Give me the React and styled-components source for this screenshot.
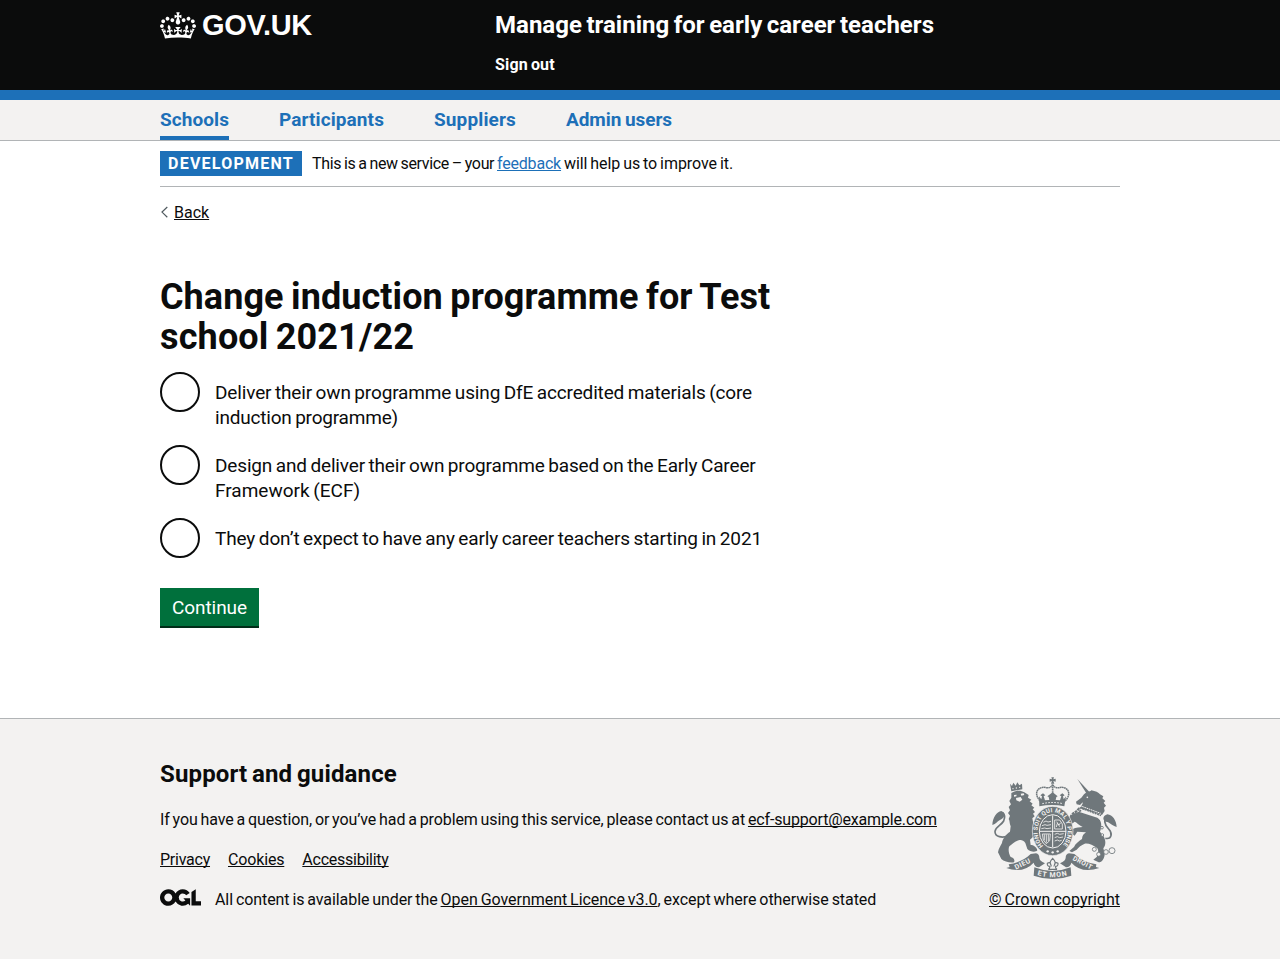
import React from "react";
import styled, { createGlobalStyle } from "styled-components";

const ink = "#0b0c0c";
const blue = "#1d70b8";
const grey = "#f3f2f1";
const line = "#b1b4b6";
const stone = "#6f777b";

const GlobalStyle = createGlobalStyle`
  html {
    background: ${grey};
  }
  body {
    margin: 0;
    color: ${ink};
    background: #fff;
    font-family: Roboto, "Liberation Sans", sans-serif;
    font-size: 16px;
    line-height: 20px;
  }
`;

const Container = styled.div`
  width: 960px;
  margin: 0 auto;
`;

/* Letter and word spacing for one run of text */
const Run = styled.span`
  letter-spacing: ${(p) => p.$track || 0}px;
  word-spacing: ${(p) => p.$word ?? -1}px;
  white-space: ${(p) => (p.$pre ? "pre" : "nowrap")};
`;

const Link = styled.a`
  color: ${(p) => (p.$blue ? blue : ink)};
  letter-spacing: ${(p) => p.$track || 0}px;
  word-spacing: -1px;
  text-decoration: underline;
  text-decoration-thickness: 1px;
  text-decoration-skip-ink: none;
  text-underline-offset: 1px;
  white-space: nowrap;
`;

const Header = styled.header`
  background: ${ink};
  color: #fff;
  border-bottom: 10px solid ${blue};
`;

const HeaderRow = styled(Container)`
  display: grid;
  grid-template-columns: 335px 1fr;
  height: 90px;
  box-sizing: border-box;
  padding-top: 10px;
`;

const Logo = styled.a`
  display: flex;
  align-items: flex-start;
  gap: 6px;
  color: #fff;
  svg {
    margin-top: 2px;
  }
`;

const Wordmark = styled.span`
  font-family: "Liberation Sans", Arial, sans-serif;
  font-size: 29px;
  line-height: 30px;
  font-weight: 700;
  letter-spacing: -0.3px;
`;

const ServiceName = styled.div`
  font-size: 24px;
  line-height: 30px;
  font-weight: 700;
  margin-bottom: 15px;
`;

const SignOut = styled.a`
  display: block;
  font-weight: 700;
`;

const Nav = styled.nav`
  background: ${grey};
  border-bottom: 1px solid ${line};
`;

const NavList = styled(Container)`
  display: flex;
  gap: 50px;
  height: 40px;
`;

const NavItem = styled.a`
  box-sizing: border-box;
  width: ${(p) => p.$width}px;
  padding-top: 7px;
  color: ${blue};
  font-size: 19px;
  line-height: 25px;
  font-weight: 700;
  border-bottom: 4px solid ${(p) => (p.$current ? blue : "transparent")};
`;

const PhaseBanner = styled.div`
  display: flex;
  align-items: flex-start;
  gap: 10px;
  padding: 10px 0;
  border-bottom: 1px solid ${line};
`;

const Tag = styled.strong`
  box-sizing: border-box;
  width: 142px;
  padding-left: 8px;
  background: ${blue};
  color: #fff;
  line-height: 25px;
  letter-spacing: 1.24px;
`;

const PhaseText = styled.span`
  padding-top: 1px;
  line-height: 23px;
`;

const BackLink = styled.div`
  display: flex;
  align-items: center;
  gap: 5px;
  height: 20px;
  margin-top: 16px;
  svg {
    margin-bottom: 2px;
  }
`;

const Main = styled.main`
  width: 630px;
  padding-top: 54px;
  height: 495px;
  box-sizing: border-box;
`;

const Title = styled.h1`
  margin: 0 0 15px;
  font-size: 36px;
  line-height: 40px;
  font-weight: 700;
`;

const RadioGroup = styled.div`
  display: flex;
  flex-direction: column;
  gap: 10px;
  margin-bottom: 30px;
`;

const RadioItem = styled.label`
  display: flex;
  gap: 15px;
  padding-bottom: ${(p) => (p.$last ? 0 : 5)}px;
`;

const Radio = styled.input`
  appearance: none;
  flex: none;
  box-sizing: border-box;
  width: 40px;
  height: 40px;
  margin: 0;
  border: 2px solid ${ink};
  border-radius: 50%;
  background: #fff;
`;

const RadioText = styled.span`
  padding-top: 8px;
  font-size: 19px;
  line-height: 25px;
`;

const Button = styled.button`
  display: block;
  width: 99px;
  height: 38px;
  padding: 1px 0 0;
  border: 0;
  background: #00703c;
  box-shadow: 0 2px 0 #002d18;
  color: #fff;
  font-family: inherit;
  font-size: 19px;
  line-height: 23px;
`;

const Footer = styled.footer`
  box-sizing: border-box;
  height: 241px;
  padding-top: 40px;
  border-top: 1px solid ${line};
  background: ${grey};
`;

const FooterRow = styled(Container)`
  display: flex;
  justify-content: space-between;
`;

const FooterTitle = styled.h2`
  margin: 0 0 21px;
  font-size: 24px;
  line-height: 30px;
  font-weight: 700;
`;

const FooterText = styled.p`
  margin: 0 0 20px;
`;

const FooterLinks = styled.div`
  display: flex;
  gap: 18px;
  margin-bottom: 20px;
`;

const Licence = styled.div`
  display: flex;
  align-items: flex-start;
  gap: 14px;
  svg {
    margin-top: -1px;
  }
`;

const Copyright = styled.div`
  display: flex;
  flex-direction: column;
  align-items: flex-end;
  padding-top: 18px;
  svg {
    margin: 0 3px 11px 0;
  }
`;

const Crown = () => (
  <svg width="36" height="27" viewBox="0 0 132 97" fill="#fff">
    <path
      fillRule="evenodd"
      d="M25 30.2c3.5 1.5 7.7-.2 9.1-3.7 1.5-3.6-.2-7.8-3.9-9.2-3.6-1.4-7.6.3-9.1 3.9-1.4 3.5.3 7.5 3.9 9zM9 39.5c3.6 1.5 7.8-.2 9.2-3.7 1.5-3.6-.2-7.8-3.9-9.1-3.6-1.5-7.6.2-9.1 3.8-1.4 3.5.3 7.5 3.8 9zM4.4 57.2c3.5 1.5 7.7-.2 9.1-3.8 1.5-3.6-.2-7.7-3.9-9.1-3.5-1.5-7.6.3-9.1 3.8-1.4 3.5.3 7.6 3.9 9.1zm38.3-21.4c3.5 1.5 7.7-.2 9.1-3.8 1.5-3.6-.2-7.7-3.9-9.1-3.6-1.5-7.6.3-9.1 3.8-1.3 3.6.4 7.7 3.9 9.1zm64.4-5.6c-3.6 1.5-7.8-.2-9.1-3.7-1.5-3.6.2-7.8 3.8-9.2 3.6-1.4 7.7.3 9.2 3.9 1.3 3.5-.4 7.5-3.9 9zm15.9 9.3c-3.6 1.5-7.7-.2-9.1-3.7-1.5-3.6.2-7.8 3.7-9.1 3.6-1.5 7.7.2 9.2 3.8 1.5 3.5-.3 7.5-3.8 9zm4.7 17.7c-3.6 1.5-7.8-.2-9.2-3.8-1.5-3.6.2-7.7 3.9-9.1 3.6-1.5 7.7.3 9.2 3.8 1.3 3.5-.4 7.6-3.9 9.1zM89.3 35.8c-3.6 1.5-7.8-.2-9.2-3.8-1.4-3.6.2-7.7 3.9-9.1 3.6-1.5 7.7.3 9.2 3.8 1.4 3.6-.3 7.7-3.9 9.1zM69.7 17.7l8.9 4.7V9.3l-8.9 2.8c-.2-.3-.5-.6-.9-.9L72.4 0H59.6l3.5 11.2c-.3.3-.6.5-.9.9l-8.8-2.8v13.1l8.8-4.7c.3.3.6.7.9.9l-5 15.4v.1c-.2.8-.4 1.6-.4 2.4 0 4.1 3.1 7.5 7 8.1h.2c.3 0 .7.1 1 .1.4 0 .7 0 1-.1h.2c4-.6 7.1-4.1 7.1-8.1 0-.8-.1-1.7-.4-2.4V34l-5.1-15.4c.4-.2.7-.6 1-.9zM66 92.8c16.9 0 32.8 1.1 47.1 3.2 4-16.9 8.9-26.7 14-33.5l-9.6-3.4c1 4.9 1.1 7.2 0 10.2-1.5-1.4-3-4.3-4.2-8.7L108.6 76c2.8-2 5-3.2 7.5-3.3-4.4 9.4-10 11.9-13.6 11.2-4.3-.8-6.3-4.6-5.6-7.9 1-4.7 5.7-5.9 8-.5 4.3-8.7-3-11.4-7.6-8.8 7.1-7.2 7.9-13.5 2.1-21.1-8 6.1-8.1 12.3-4.5 20.8-4.7-5.4-12.1-2.5-9.5 6.2 3.4-5.2 7.9-2 7.2 3.1-.6 4.3-6.4 7.8-13.5 7.2-10.3-.9-10.9-8-11.2-13.8 2.5-.5 7.1 1.8 11 7.3L80.2 60c-4.1 4.4-8 5.3-12.3 5.4 1.4-4.4 8-11.6 8-11.6H55.5s6.4 7.2 7.9 11.6c-4.2-.1-8-1-12.3-5.4l1.4 16.4c3.9-5.5 8.5-7.7 10.9-7.3-.3 5.8-.9 12.8-11.1 13.8-7.2.6-12.9-2.9-13.5-7.2-.7-5 3.8-8.3 7.1-3.1 2.7-8.7-4.6-11.6-9.4-6.2 3.7-8.5 3.6-14.7-4.6-20.8-5.8 7.6-5 13.9 2.2 21.1-4.7-2.6-11.9.1-7.7 8.8 2.3-5.5 7.1-4.2 8.1.5.7 3.3-1.3 7.1-5.7 7.9-3.5.7-9-1.8-13.5-11.2 2.5.1 4.7 1.3 7.5 3.3l-4.7-15.4c-1.2 4.4-2.7 7.2-4.3 8.7-1.1-3-.9-5.3 0-10.2l-9.5 3.4c5 6.9 9.9 16.7 14 33.5 14.8-2.1 30.8-3.2 47.7-3.2z"
    />
  </svg>
);

const OglLogo = () => (
  <svg width="41" height="17" viewBox="0 0 483.2 195.7" fill={ink}>
    <path d="M421.5 142.8V.1l-50.7 32.3v161.1h112.4v-50.7zm-122.3-9.6A47.12 47.12 0 0 1 221 97.8c0-26 21.1-47.1 47.1-47.1 16.7 0 31.4 8.7 39.7 21.8l42.7-27.2A97.63 97.63 0 0 0 268.1 0c-36.5 0-68.3 20.1-85.1 49.7A98 98 0 0 0 97.8 0C43.9 0 0 43.9 0 97.8s43.9 97.8 97.8 97.8c36.5 0 68.3-20.1 85.1-49.7a97.76 97.76 0 0 0 149.6 25.4l19.4 22.2h3v-87.8h-80l24.3 27.5zM97.8 145c-26 0-47.1-21.1-47.1-47.1s21.1-47.1 47.1-47.1 47.1 21.1 47.1 47.1S123.8 145 97.8 145" />
  </svg>
);

const BackArrow = () => (
  <svg width="9" height="12" viewBox="0 0 9 12" fill="none" stroke="#505a5f" strokeWidth="1.2">
    <path d="M7.3 1 2 6.1l5.3 5.1" />
  </svg>
);

const CoatOfArms = () => (
  <svg width="125" height="102" viewBox="36 36 375 306" fill={stone} fontFamily="Roboto, sans-serif" fontWeight="700">
    {/* lion */}
    <path d="M90 56l6 7 4-10 7 9 5-10 6 9 8-5 1 17-33 6z" />
    <g fill={grey}>
      <circle cx="99" cy="71" r="2" />
      <circle cx="109" cy="69" r="2" />
      <circle cx="119" cy="67" r="2" />
    </g>
    <path d="M94 84C106 76 122 74 133 82L146 90 144 98 154 104 149 109 158 116 154 121 163 128 158 133 165 141 159 146 164 154 157 160 160 176C168 180 166 188 160 190L166 206C160 216 154 220 150 224L152 240C160 240 170 246 172 256 166 264 150 260 142 252L136 234C130 226 124 224 116 226 106 228 96 238 88 244 84 252 86 266 92 276 100 278 106 284 102 292 90 294 72 290 64 282L54 262C56 250 62 242 66 234 68 220 78 208 90 200L92 184C88 176 90 168 86 162L90 152 84 144 90 136 86 126 93 118 88 108 94 98Z" />
    <g fill={grey}>
      <path d="M102 90l8-1-1 5-7 1zM122 86l9-1 2 5-9 2zM108 99l14-3 5 8-8 6-10-4z" />
    </g>
    <path d="M84 212C68 220 44 216 45 199 47 184 64 181 71 168 76 156 74 148 68 143" fill="none" stroke={stone} strokeWidth="5" />
    <path d="M37 180C38 158 50 140 64 138 76 142 76 156 64 163 52 168 48 178 37 180z" />

    {/* unicorn */}
    <path d="M292 42l37 40-8 6z" />
    <path d="M312 88C320 80 328 82 334 76 346 78 356 82 360 88L370 94 367 100 376 108 371 113 378 122 372 128 374 138 366 150 300 130C304 122 310 116 308 112L300 120 290 118 288 110 304 98Z" />
    <circle cx="322" cy="97" r="2.5" fill={grey} />
    <path d="M299 128l64 24" stroke={stone} strokeWidth="4" strokeDasharray="6 2" />
    <path d="M300 122l62 23" stroke={grey} strokeWidth="3" fill="none" strokeDasharray="5 2" />
    <path d="M296 140L352 158C366 166 366 184 360 200L370 212C378 226 378 240 370 250L374 266C374 280 366 292 356 292L340 284 350 276C356 268 356 256 352 250 338 240 326 234 314 236 304 240 296 246 290 254L276 262 268 258 282 246C286 236 298 228 306 222 306 212 312 206 318 202L292 200 284 212 276 206 278 192C288 186 300 188 308 186 296 180 290 172 284 170L276 176 268 164 270 152 282 146Z" />
    <path d="M376 220C396 224 398 204 386 192 372 178 372 164 380 154" fill="none" stroke={stone} strokeWidth="5" />
    <path d="M410 186C409 166 398 150 382 148 368 152 366 166 378 170 390 172 394 180 410 186z" />
    <path d="M268 166l8-18 12-8 8-8 6 8" fill="none" stroke={stone} strokeWidth="7" strokeDasharray="8 2" />
    <g fill={grey} stroke={stone} strokeWidth="2.5">
      <circle cx="343" cy="253" r="6" />
      <circle cx="356" cy="268" r="6" />
      <circle cx="378" cy="261" r="7" />
      <circle cx="396" cy="257" r="9" />
      <circle cx="366" cy="188" r="4" />
      <circle cx="367" cy="210" r="4" />
    </g>

    {/* garter and quartered shield */}
    <ellipse cx="218" cy="198" rx="61" ry="74" stroke={grey} strokeWidth="2" />
    <path id="garter" d="M190 243A45 57 0 1 1 246 243" fill="none" />
    <text fontSize="18" fill={grey}>
      <textPath href="#garter" textLength="254">HONI SOIT QUI MAL Y PENSE</textPath>
    </text>
    <ellipse cx="218" cy="199" rx="40" ry="50" stroke={grey} strokeWidth="3" />
    <path d="M218 151v96M178 199h80" stroke={grey} strokeWidth="3" />
    <g fill="none" stroke={grey} strokeWidth="2.5">
      <path d="M190 172l8-4 6 3 9-2M186 182l9-3 6 2 12-2M184 191l10-2 7 2 12-2" />
      <path d="M224 165h15l8 12v15h-23zM229 186l3-11 5 5 5-7M230 170l9 15" />
      <path d="M187 207h24l-2 20-10 9-9-11zM193 208v18M199 208v25M205 208v20" />
      <path d="M224 208l8-3 7 3 12-2M224 218l8-3 7 3 10-2M224 228l8-3 6 3 7-2" />
    </g>
    <g fill={grey}>
      <circle cx="203" cy="259" r="3.5" />
      <circle cx="218" cy="262" r="3.5" />
      <circle cx="233" cy="259" r="3.5" />
    </g>

    {/* royal crown */}
    <path d="M170 103h96l-10 25q-38-8-76 0z" fill={grey} />
    <path d="M214 37h8l-2 6 7-2v9l-7-2 3 8h-10l3-8-7 2v-9l7 2z" />
    <path d="M184 111C156 86 174 62 199 68q14 2 19-10 5 12 19 10c25-6 43 18 15 43" fill="none" stroke={stone} strokeWidth="4.5" strokeDasharray="5 1.2" />
    <path d="M218 60v26" stroke={stone} strokeWidth="5" strokeDasharray="4 1.5" />
    <path d="M177 94l7 9 2-9-5-3 8-6 7 6-5 3 4 12 13-1-2-9-4-2 16-12 15 12-4 2-2 9 13 1 4-12-5-3 8-6 7 6-5 3 2 9 7-9-5 30q-37-8-75 0z" />
    <path d="M187 116q31-7 62 0" stroke={grey} strokeWidth="3" strokeDasharray="5 4" fill="none" />

    {/* motto ribbon */}
    <path d="M86 298q40-6 66-31l16-2q10 2 10 13 0 9 17 17l-18 12q-14-2-16-14-20 22-50 22-16 0-32-6l10-3z" />
    <path d="M349 298q-40-6-66-31l-16-2q-10 2-10 13 0 9-17 17l18 12q14-2 16-14 20 22 50 22 16 0 34-6l-10-3z" />
    <path d="M163 307q54 22 109 0l2 25q-56 20-113 0z" />
    <text x="108" y="314" fontSize="21" fill={grey} textLength="50" transform="rotate(-26 108 314)">DIEU</text>
    <text x="277" y="284" fontSize="20" fill={grey} textLength="62" transform="rotate(28 277 284)">DROIT</text>
    <path id="motto" d="M172 330q46 13 92 0" fill="none" />
    <text fontSize="21" fill={grey}>
      <textPath href="#motto" textLength="90">ET MON</textPath>
    </text>
    <g fill={grey} stroke={stone} strokeWidth="3.5">
      <path d="M218 280q-12 12-5 20-2-11-11-5-1 9 8 9-1 7-5 9h26q-4-2-5-9 9 0 8-9-9-6-11 5 7-8-5-20z" />
    </g>
  </svg>
);

const navItems = [
  { label: "Schools", width: 69, track: 0.075, current: true },
  { label: "Participants", width: 105, track: 0.1 },
  { label: "Suppliers", width: 82, track: 0.139 },
  { label: "Admin users", width: 106, track: -0.06 },
];

const options = [
  [
    { text: "Deliver their own programme using DfE accredited materials (core", track: -0.145 },
    { text: "induction programme)", track: -0.2 },
  ],
  [
    { text: "Design and deliver their own programme based on the Early Career", track: -0.155 },
    { text: "Framework (ECF)", track: 0 },
  ],
  [{ text: "They don’t expect to have any early career teachers starting in 2021", track: -0.13 }],
];

export default function App() {
  return (
    <>
      <GlobalStyle />
      <Header>
        <HeaderRow>
          <Logo>
            <Crown />
            <Wordmark>GOV.UK</Wordmark>
          </Logo>
          <div>
            <ServiceName>
              <Run $track={0.015} $word={-1.5}>Manage training for early career teachers</Run>
            </ServiceName>
            <SignOut>
              <Run $track={0.15}>Sign out</Run>
            </SignOut>
          </div>
        </HeaderRow>
      </Header>
      <Nav>
        <NavList>
          {navItems.map((item) => (
            <NavItem key={item.label} $width={item.width} $current={item.current}>
              <Run $track={item.track}>{item.label}</Run>
            </NavItem>
          ))}
        </NavList>
      </Nav>
      <Container>
        <PhaseBanner>
          <Tag>DEVELOPMENT</Tag>
          <PhaseText>
            <Run $pre $track={-0.345} $word={-0.8}>{"This is a new service – your "}</Run>
            <Link $blue $track={-0.19}>feedback</Link>
            <Run $pre $track={-0.057}>{" will help us to improve it."}</Run>
          </PhaseText>
        </PhaseBanner>
        <BackLink>
          <BackArrow />
          <Link>Back</Link>
        </BackLink>
        <Main>
          <Title>
            <Run $track={0.07} $word={-1.5}>Change induction programme for Test</Run>
            <br />
            <Run $track={0.16} $word={-2}>school 2021/22</Run>
          </Title>
          <RadioGroup>
            {options.map((lines, i) => (
              <RadioItem key={lines[0].text} $last={i === options.length - 1}>
                <Radio type="radio" name="programme" />
                <RadioText>
                  {lines.map((l, n) => (
                    <React.Fragment key={l.text}>
                      {n > 0 && <br />}
                      <Run $track={l.track}>{l.text}</Run>
                    </React.Fragment>
                  ))}
                </RadioText>
              </RadioItem>
            ))}
          </RadioGroup>
          <Button>
            <Run $track={-0.07}>Continue</Run>
          </Button>
        </Main>
      </Container>
      <Footer>
        <FooterRow>
          <div>
            <FooterTitle>
              <Run $track={0.16} $word={-1.5}>Support and guidance</Run>
            </FooterTitle>
            <FooterText>
              <Run $pre $track={-0.1}>
                {"If you have a question, or you’ve had a problem using this service, please contact us at "}
              </Run>
              <Link $track={-0.16}>ecf-support@example.com</Link>
            </FooterText>
            <FooterLinks>
              <Link $track={-0.24}>Privacy</Link>
              <Link $track={-0.16}>Cookies</Link>
              <Link $track={-0.25}>Accessibility</Link>
            </FooterLinks>
            <Licence>
              <OglLogo />
              <div>
                <Run $pre $track={-0.075}>{"All content is available under the "}</Run>
                <Link $track={-0.04}>Open Government Licence v3.0</Link>
                <Run $pre $track={-0.05}>, except where otherwise stated</Run>
              </div>
            </Licence>
          </div>
          <Copyright>
            <CoatOfArms />
            <Link $track={0.03}>© Crown copyright</Link>
          </Copyright>
        </FooterRow>
      </Footer>
    </>
  );
}
